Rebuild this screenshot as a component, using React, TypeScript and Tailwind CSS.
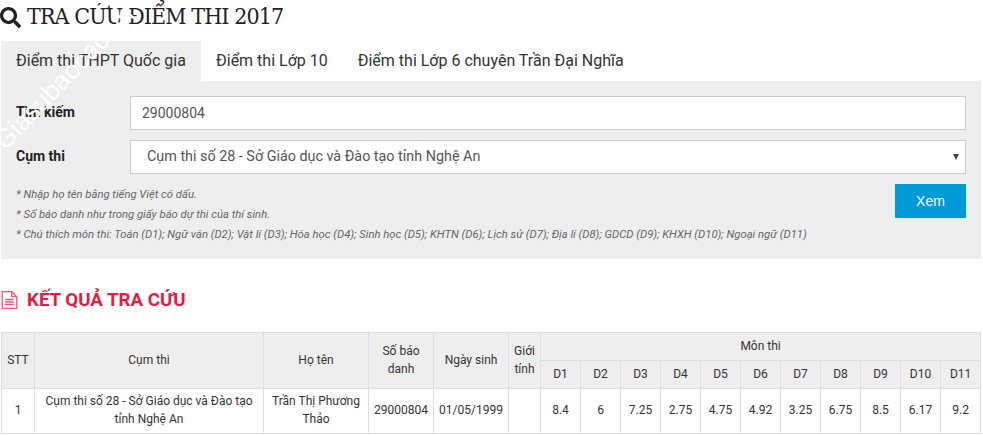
import { FaSearch } from "react-icons/fa";

const subjects = ["D1","D2","D3","D4","D5","D6","D7","D8","D9","D10","D11"];
const scores = ["8.4","6","7.25","2.75","4.75","4.92","3.25","6.75","8.5","6.17","9.2"];
const th = "border border-[#ddd] bg-[#eee] font-normal text-center align-middle p-0 pb-[2px]";
const td = "border border-[#ddd] text-center align-middle p-0 pb-[2px]";

export default function App() {
  return (
    <div className="relative w-[983px] h-[435px] overflow-hidden bg-white text-[#333] font-['Roboto',sans-serif]">
      <h1 className="flex items-center gap-[6px] h-[33px] text-[23px] leading-[33px] text-[#222] font-['DejaVu_Serif_Condensed','DejaVu_Serif',serif] font-normal">
        <FaSearch className="ml-[0px] w-[21px] h-[21px] text-[#222] mt-[1px]" />
        <span className="font-stretch-condensed tracking-[-0.9px]">TRA CỨU ĐIỂM THI 2017</span>
      </h1>
      <div className="mt-[8px] ml-[1px] w-[980px]">
        <div className="flex h-[40px] text-[16px] text-[#333]">
          <div className="flex items-center w-[200px] pl-[15px] bg-[#eee]">Điểm thi THPT Quốc gia</div>
          <div className="flex items-center pl-[15px] pr-[15px]">Điểm thi Lớp 10</div>
          <div className="flex items-center pl-[15px] pr-[15px]">Điểm thi Lớp 6 chuyên Trần Đại Nghĩa</div>
        </div>
        <div className="h-[178px] bg-[#eee] pt-[15px] pl-[15px] pr-[15px]">
          <div className="flex items-center h-[34px] gap-0">
            <label className="w-[114px] text-[14px] font-bold text-[#222] shrink-0 -mt-[2px]">Tìm kiếm</label>
            <div className="flex-1 h-[34px] flex items-center border border-[#ccc] bg-white pl-[11px] pt-[1px] text-[14px] text-[#555]">29000804</div>
          </div>
          <div className="flex items-center h-[34px] mt-[10px]">
            <label className="w-[114px] text-[14px] font-bold text-[#222] shrink-0 -mt-[2px]">Cụm thi</label>
            <div className="relative flex-1 h-[34px] flex items-center border border-[#ccc] bg-white pl-[16px] text-[14.35px] text-[#555]">
              Cụm thi số 28 - Sở Giáo dục và Đào tạo tỉnh Nghệ An
              <svg className="absolute right-[6px] top-[13px] w-[6px] h-[6px]" viewBox="0 0 6 6"><path d="M0 0h6L3 6z" fill="#444" /></svg>
            </div>
          </div>
          <div className="flex justify-between mt-[10px]">
            <div className="pt-[1px] text-[11.28px] italic text-[#666] leading-[20px]">
              <p>* Nhập họ tên bằng tiếng Việt có dấu.</p>
              <p>* Số báo danh như trong giấy báo dự thi của thí sinh.</p>
              <p>* Chú thích môn thi: Toán (D1); Ngữ văn (D2); Vật lí (D3); Hóa học (D4); Sinh học (D5); KHTN (D6); Lịch sử (D7); Địa lí (D8); GDCD (D9); KHXH (D10); Ngoại ngữ (D11)</p>
            </div>
            <button className="w-[71px] h-[34px] bg-[#009ad8] text-white text-[14px] font-['Liberation_Sans',sans-serif]">Xem</button>
          </div>
        </div>
      </div>
      <h2 className="flex items-center gap-[9px] mt-[30px] h-[22px] text-[18.7px] font-bold text-[#e51c44]">
        <svg className="ml-[1px] w-[17px] h-[18px] shrink-0" viewBox="0 0 17 18" fill="none" stroke="#e85a76" strokeWidth="1.3">
          <path d="M1.2 0.7h9.6l5 5v11.6h-14.6z" />
          <path d="M10.8 0.7v5h5" />
          <path d="M4.2 8.5h8.6M4.2 11h8.6M4.2 13.5h8.6" />
        </svg>
        <span>KẾT QUẢ TRA CỨU</span>
      </h2>
      <table className="mt-[21px] ml-[1px] w-[979px] border-collapse table-fixed text-[12px] text-[#333] leading-[18px]">
        <colgroup>
          <col className="w-[33px]" />
          <col className="w-[229px]" />
          <col className="w-[105px]" />
          <col className="w-[65px]" />
          <col className="w-[75px]" />
          <col className="w-[32px]" />
          {subjects.map((s) => <col key={s} className="w-[40px]" />)}
        </colgroup>
        <thead>
          <tr className="h-[28px]">
            <th rowSpan={2} className={th}>STT</th>
            <th rowSpan={2} className={th}>Cụm thi</th>
            <th rowSpan={2} className={th}>Họ tên</th>
            <th rowSpan={2} className={th}>Số báo<br />danh</th>
            <th rowSpan={2} className={th}>Ngày sinh</th>
            <th rowSpan={2} className={th}>Giới<br />tính</th>
            <th colSpan={11} className={th}>Môn thi</th>
          </tr>
          <tr className="h-[28px]">
            {subjects.map((s) => <th key={s} className={th}>{s}</th>)}
          </tr>
        </thead>
        <tbody>
          <tr className="h-[45px]">
            <td className={td}>1</td>
            <td className={td}>Cụm thi số 28 - Sở Giáo dục và Đào tạo<br />tỉnh Nghệ An</td>
            <td className={td}>Trần Thị Phương<br />Thảo</td>
            <td className={td}>29000804</td>
            <td className={td}>01/05/1999</td>
            <td className={td}></td>
            {scores.map((s, i) => <td key={i} className={td}>{s}</td>)}
          </tr>
        </tbody>
      </table>
      <div className="absolute left-[8px] top-[128px] origin-bottom-left -rotate-[46deg] text-[26px] leading-none text-white whitespace-nowrap font-['Liberation_Sans',sans-serif]">Giasubaocao.vn</div>
    </div>
  );
}
